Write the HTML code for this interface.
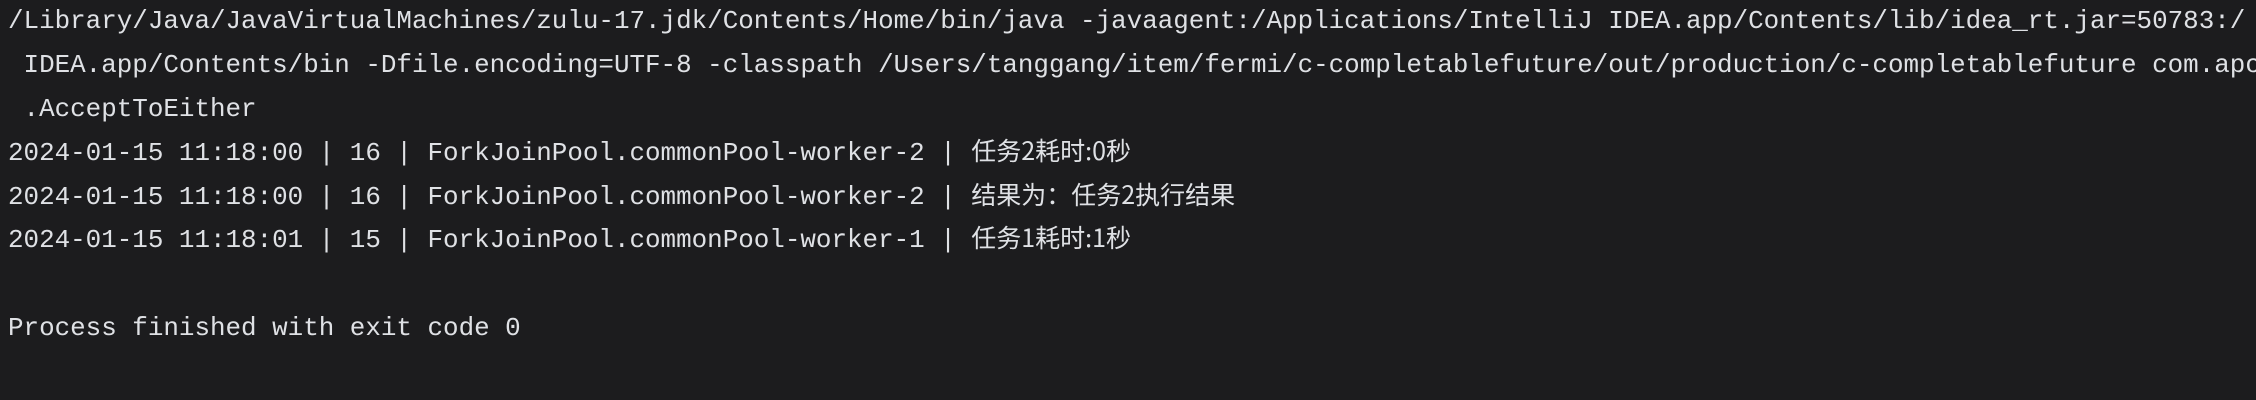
<!DOCTYPE html>
<html><head><meta charset="utf-8"><style>
html,body{margin:0;padding:0;background:#1c1c1e;width:2256px;height:400px;overflow:hidden}
.p{padding-left:8px;font-family:"Liberation Mono",monospace;font-size:25.9px;color:#dfe1e5}
.p div{height:43.9px;line-height:43.9px;overflow:visible;white-space:pre}
.c{font-family:"Noto Sans CJK SC",sans-serif;font-size:25px;line-height:20px;display:inline-block;vertical-align:baseline}
</style></head><body><div class="p">
<div>/Library/Java/JavaVirtualMachines/zulu-17.jdk/Contents/Home/bin/java -javaagent:/Applications/IntelliJ IDEA.app/Contents/lib/idea_rt.jar=50783:/</div>
<div> IDEA.app/Contents/bin -Dfile.encoding=UTF-8 -classpath /Users/tanggang/item/fermi/c-completablefuture/out/production/c-completablefuture com.apo</div>
<div> .AcceptToEither</div>
<div>2024-01-15 11:18:00 | 16 | ForkJoinPool.commonPool-worker-2 | <span class="c">任务2耗时:0秒</span></div>
<div>2024-01-15 11:18:00 | 16 | ForkJoinPool.commonPool-worker-2 | <span class="c">结果为：任务2执行结果</span></div>
<div>2024-01-15 11:18:01 | 15 | ForkJoinPool.commonPool-worker-1 | <span class="c">任务1耗时:1秒</span></div>
<div></div>
<div>Process finished with exit code 0</div>
</div></body></html>
